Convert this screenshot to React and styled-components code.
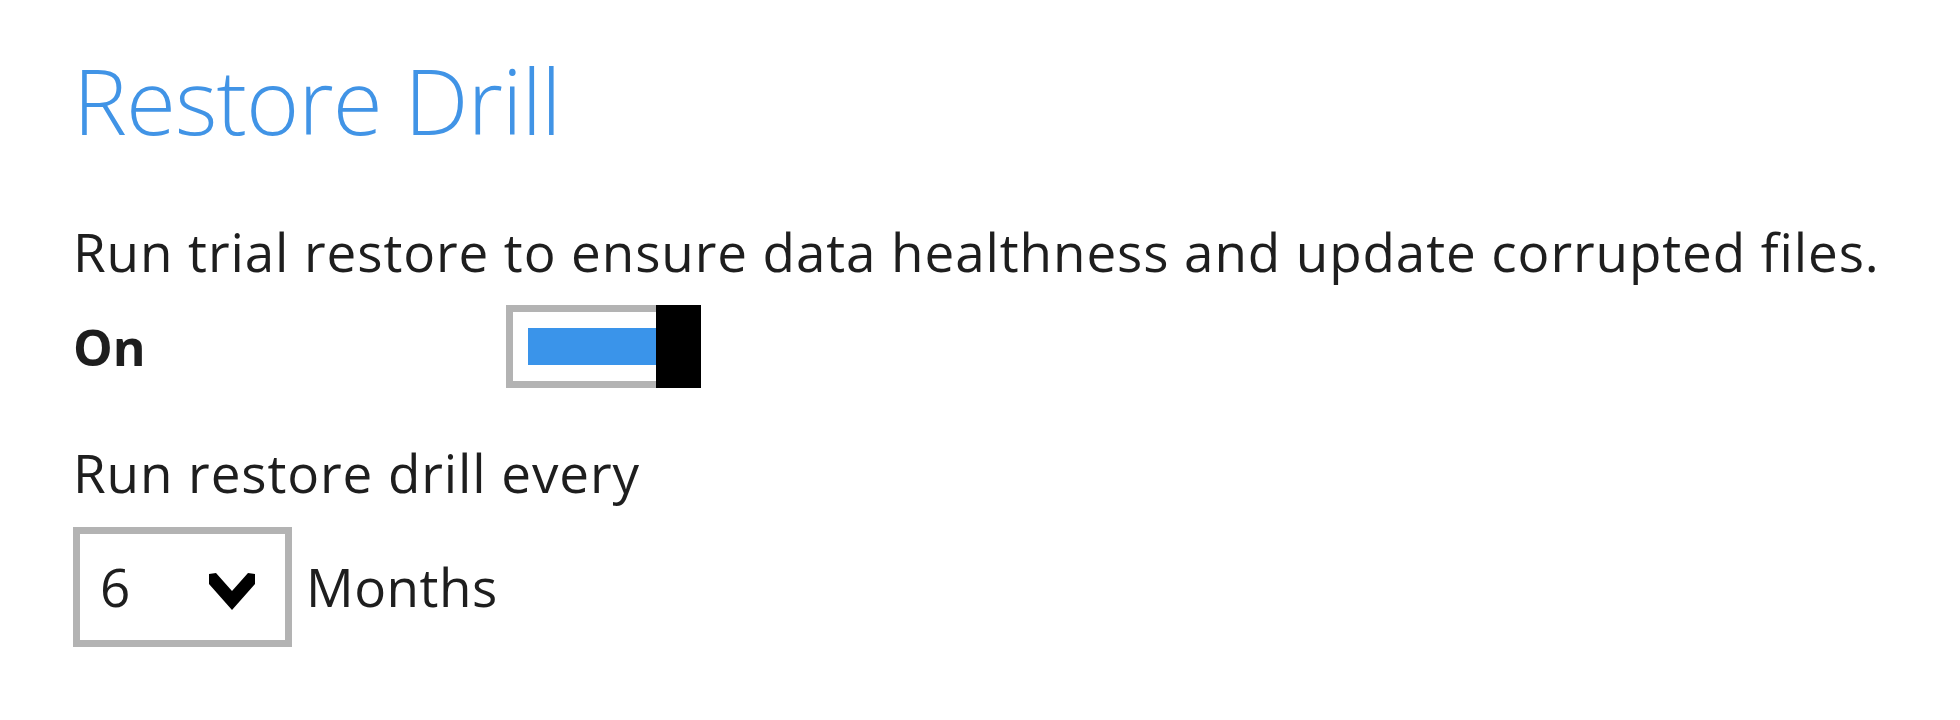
import React, { useState } from 'react';
import styled, { createGlobalStyle } from 'styled-components';

const GlobalStyle = createGlobalStyle`
  html, body {
    margin: 0;
    padding: 0;
    background: #ffffff;
  }
  body {
    font-family: "Open Sans", "Noto Sans", "Liberation Sans", sans-serif;
    color: #1e1e1e;
  }
`;

const Page = styled.div`
  width: 1960px;
  height: 720px;
  box-sizing: border-box;
  padding: 45px 0 0 73px;
  overflow: hidden;
`;

const Title = styled.h1`
  margin: 0;
  font-size: 91px;
  line-height: 110px;
  font-weight: 300;
  color: #4194e6;
  letter-spacing: -1px;
`;

const Text = styled.p`
  margin: ${(p) => p.$top}px 0 0;
  font-size: 53px;
  line-height: 60px;
  letter-spacing: 0.9px;
  font-weight: 400;
  color: #1e1e1e;
  white-space: nowrap;
`;

const Row = styled.div`
  display: flex;
  align-items: center;
  margin-top: ${(p) => p.$top}px;
`;

const SwitchLabel = styled.span`
  width: 433px;
  font-size: 50px;
  line-height: 60px;
  font-weight: 700;
`;

const Switch = styled.button`
  display: flex;
  height: 83px;
  padding: 0;
  border: none;
  background: none;
  cursor: pointer;
`;

const Track = styled.span`
  display: flex;
  width: 150px;
  box-sizing: border-box;
  border: 7px solid #b3b3b3;
  border-right: none;
  padding: 16px 0 16px 15px;
  background: #ffffff;
`;

const Fill = styled.span`
  flex: 1;
  background: ${(p) => (p.$on ? '#3a94ea' : 'transparent')};
`;

const Thumb = styled.span`
  width: 45px;
  background: #000000;
`;

const Select = styled.div`
  display: flex;
  align-items: center;
  justify-content: space-between;
  width: 219px;
  height: 120px;
  box-sizing: border-box;
  border: 7px solid #b3b3b3;
  padding: 0 30px 0 20px;
  font-size: 53px;
  line-height: 60px;
  cursor: pointer;
`;

const Chevron = styled.svg`
  width: 46px;
  height: 37px;
  margin-top: 9px;
  display: block;
`;

const Unit = styled.span`
  margin-left: 14px;
  font-size: 53px;
  line-height: 60px;
  letter-spacing: 0.5px;
`;

const App = () => {
  const [on, setOn] = useState(true);

  return (
    <>
      <GlobalStyle />
      <Page>
        <Title>Restore Drill</Title>
        <Text $top={67}>Run trial restore to ensure data healthness and update corrupted files.</Text>
        <Row $top={23}>
          <SwitchLabel>{on ? 'On' : 'Off'}</SwitchLabel>
          <Switch onClick={() => setOn(!on)} aria-label="Restore drill">
            <Track>
              <Fill $on={on} />
            </Track>
            <Thumb />
          </Switch>
        </Row>
        <Text $top={55}>Run restore drill every</Text>
        <Row $top={24}>
          <Select>
            <span>6</span>
            <Chevron viewBox="0 0 46 37">
              <polygon points="0,1 7,0 23,18 39,0 46,1 46,11 23,37 0,11" fill="#000" />
            </Chevron>
          </Select>
          <Unit>Months</Unit>
        </Row>
      </Page>
    </>
  );
};

export default App;
